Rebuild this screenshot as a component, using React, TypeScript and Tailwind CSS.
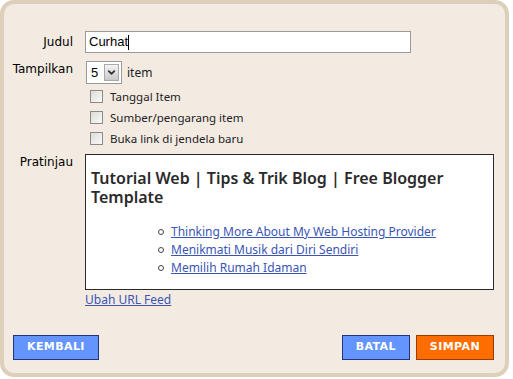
import { ChevronDown } from "lucide-react"

const LABEL_FONT = "font-['DejaVu_Sans',Verdana,sans-serif]"
const BODY_FONT = "font-['Noto_Sans','Open_Sans',sans-serif]"

const OPTIONS = ["Tanggal Item", "Sumber/pengarang item", "Buka link di jendela baru"]

const PREVIEW_LINKS = [
  "Thinking More About My Web Hosting Provider",
  "Menikmati Musik dari Diri Sendiri",
  "Memilih Rumah Idaman",
]

const FieldLabel = ({ children, center }: { children: string; center?: boolean }) => (
  <div
    className={`w-[69px] shrink-0 text-right text-[12px] leading-[15px] text-black ${LABEL_FONT} ${center ? "self-center" : "pt-[1px]"}`}
  >
    {children}
  </div>
)

const Checkbox = ({ label }: { label: string }) => (
  <label className="flex items-center h-[21px] gap-[7px] pl-[5px]">
    <span className="w-[13px] h-[13px] border border-[#8a8a8a] bg-gradient-to-br from-[#dcdcd6] to-[#fafafa]" />
    <span className={`text-[11.5px] text-[#222] ${BODY_FONT}`}>{label}</span>
  </label>
)

const FeedButton = ({ label, tone }: { label: string; tone: "blue" | "orange" }) => (
  <button
    className={`h-[25px] px-[13px] text-[11px] font-bold text-white tracking-[0.4px] ${LABEL_FONT} border ${
      tone === "blue" ? "bg-[#6495ff] border-[#22347a]" : "bg-[#ff6d00] border-[#9c3c00]"
    }`}
  >
    {label}
  </button>
)

export default function App() {
  return (
    <div className="w-[513px] h-[379px] bg-white">
      <div className="w-[509px] h-[377px] rounded-[14px] border-4 border-[#ddd0ba] bg-[#f3ebe2] flex flex-col pt-[27px]">
        {/* Judul */}
        <div className="flex gap-[12px]">
          <FieldLabel center>Judul</FieldLabel>
          <div className="w-[326px] h-[22px] bg-white border border-[#9a9a9a] flex items-center pl-[3px]">
            <span className="text-[13px] text-black font-['Liberation_Sans',Arial,sans-serif]">Curhat</span>
            <span className="w-px h-[15px] bg-black" />
          </div>
        </div>

        {/* Tampilkan */}
        <div className="flex gap-[12px] mt-[8px]">
          <FieldLabel>Tampilkan</FieldLabel>
          <div className="flex flex-col">
            <div className="flex items-center gap-[5px]">
              <div className="ml-px w-[36px] h-[23px] bg-white border border-[#9a9a9a] flex items-center justify-between pl-[4px] pr-[2px]">
                <span className="text-[13px] text-black font-['Liberation_Sans',Arial,sans-serif]">5</span>
                <span className="w-[15px] h-[17px] border border-[#a9a9a9] bg-gradient-to-b from-[#f4f4f4] to-[#c9c9c9] flex items-center justify-center">
                  <ChevronDown size={11} strokeWidth={4} className="text-[#333]" />
                </span>
              </div>
              <span className={`text-[12px] text-[#222] ${BODY_FONT}`}>item</span>
            </div>
            <div className="flex flex-col mt-[2px]">
              {OPTIONS.map((o) => (
                <Checkbox key={o} label={o} />
              ))}
            </div>
          </div>
        </div>

        {/* Pratinjau */}
        <div className="flex gap-[12px] mt-[5px]">
          <FieldLabel>Pratinjau</FieldLabel>
          <div className="flex flex-col">
            <div className="w-[409px] h-[136px] bg-white border border-[#2b2b2b] pl-[5px] pt-[14px]">
              <h2 className={`text-[16px] leading-[19px] font-semibold text-[#2a2a2a] ${BODY_FONT}`}>
                Tutorial Web | Tips &amp; Trik Blog | Free Blogger Template
              </h2>
              <ul className="mt-[16px] pl-[67px] flex flex-col">
                {PREVIEW_LINKS.map((l) => (
                  <li key={l} className="flex items-center h-[18px] gap-[7px]">
                    <span className="w-[6px] h-[6px] rounded-full border border-[#444]" />
                    <a className={`text-[12px] text-[#3a55b4] underline ${BODY_FONT}`}>{l}</a>
                  </li>
                ))}
              </ul>
            </div>
            <a className={`mt-[1px] text-[12px] text-[#3a55b4] underline ${BODY_FONT}`}>Ubah URL Feed</a>
          </div>
        </div>

        {/* Buttons */}
        <div className="mt-auto mb-[13px] flex items-center pl-[9px] pr-[11px]">
          <FeedButton label="KEMBALI" tone="blue" />
          <div className="ml-auto flex gap-[6px]">
            <FeedButton label="BATAL" tone="blue" />
            <FeedButton label="SIMPAN" tone="orange" />
          </div>
        </div>
      </div>
    </div>
  )
}
